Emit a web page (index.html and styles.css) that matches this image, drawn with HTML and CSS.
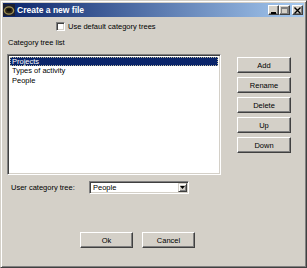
FILE: index.html
```html
<!DOCTYPE html>
<html lang="en">
<head>
  <meta charset="UTF-8" />
  <title>Create a new file</title>
  <link rel="stylesheet" href="styles.css">
</head>
<body>
  <div class="window">
    <div class="titlebar">
      <svg class="app-icon" width="12" height="12" viewBox="0 0 12 12">
        <rect x="0" y="0" width="12" height="12" fill="#1c2030"/>
        <ellipse cx="6" cy="6.5" rx="4.6" ry="3.6" fill="#2a2418" stroke="#a09050" stroke-width="1.4"/>
        <ellipse cx="6" cy="6" rx="2.2" ry="1.4" fill="#0c0c08"/>
      </svg>
      <span class="title">Create a new file</span>
      <div class="title-buttons">
        <div class="tbtn"><svg width="7" height="7" viewBox="0 0 7 7"><rect x="1" y="5" width="5" height="2" fill="#000"/></svg></div>
        <div class="tbtn"><svg width="7" height="7" viewBox="0 0 7 7"><rect x="0.5" y="0.5" width="6" height="6" fill="none" stroke="#808080"/><rect x="0" y="0" width="7" height="2" fill="#808080"/></svg></div>
        <div class="tbtn close"><svg width="7" height="7" viewBox="0 0 7 7"><path d="M0.5 0.5 L6.5 6.5 M6.5 0.5 L0.5 6.5" stroke="#000" stroke-width="1.4"/></svg></div>
      </div>
    </div>

    <div class="content">
      <div class="check-row">
        <span class="checkbox"></span>
        <span>Use default category trees</span>
      </div>

      <div class="label">Category tree list</div>

      <div class="main-row">
        <div class="listbox">
          <div class="item selected">Projects</div>
          <div class="item">Types of activity</div>
          <div class="item">People</div>
        </div>
        <div class="side-buttons">
          <div class="button">Add</div>
          <div class="button">Rename</div>
          <div class="button">Delete</div>
          <div class="button">Up</div>
          <div class="button">Down</div>
        </div>
      </div>

      <div class="combo-row">
        <span class="combo-label">User category tree:</span>
        <div class="combo">
          <span class="combo-text">People</span>
          <span class="combo-arrow"><svg width="5" height="3" viewBox="0 0 5 3"><path d="M0 0 H5 L2.5 3 Z" fill="#000"/></svg></span>
        </div>
      </div>

      <div class="footer">
        <div class="button wide">Ok</div>
        <div class="button wide">Cancel</div>
      </div>
    </div>
  </div>
</body>
</html>
```

FILE: styles.css
```css
body {
  margin: 0;
  font-family: "Liberation Sans", Arial, sans-serif;
  font-size: 7.5px;
  color: #000;
  background: #d4d0c8;
}
.window {
  width: 307px;
  height: 268px;
  box-sizing: border-box;
  background: #d4d0c8;
  border: 1px solid;
  border-color: #d4d0c8 #404040 #404040 #d4d0c8;
  box-shadow: inset 1px 1px #fff, inset -1px -1px #808080;
  padding: 2px;
}
.titlebar {
  height: 14px;
  display: flex;
  align-items: center;
  background: linear-gradient(to right, #0a246a, #a6caf0);
  color: #fff;
}
.app-icon {
  flex: none;
}
.title {
  margin-left: 2px;
  font-weight: bold;
  font-size: 8.5px;
}
.title-buttons {
  margin-left: auto;
  margin-right: 1px;
  display: flex;
}
.tbtn {
  width: 11px;
  height: 10px;
  box-sizing: border-box;
  background: #d4d0c8;
  border: 1px solid;
  border-color: #fff #404040 #404040 #fff;
  box-shadow: inset -1px -1px #808080;
  display: flex;
  align-items: center;
  justify-content: center;
}
.tbtn.close {
  margin-left: 2px;
}
.content {
  display: flex;
  flex-direction: column;
}
.check-row {
  margin-top: 5px;
  margin-left: 53px;
  height: 9px;
  display: flex;
  align-items: center;
  gap: 3px;
}
.checkbox {
  width: 9px;
  height: 9px;
  box-sizing: border-box;
  background: #fff;
  border: 1px solid;
  border-color: #808080 #fff #fff #808080;
  box-shadow: inset 1px 1px #404040, inset -1px -1px #d4d0c8;
}
.label {
  margin-top: 7px;
  margin-left: 5px;
  line-height: 10px;
}
.main-row {
  margin-top: 6px;
  display: flex;
  align-items: flex-start;
}
.listbox {
  margin-left: 4px;
  width: 214px;
  height: 121px;
  box-sizing: border-box;
  background: #fff;
  color: #000;
  border: 1px solid;
  border-color: #808080 #fff #fff #808080;
  box-shadow: inset 1px 1px #404040, inset -1px -1px #d4d0c8;
  padding: 2px;
}
.item {
  height: 9.4px;
  line-height: 9.4px;
  padding-left: 2px;
  white-space: nowrap;
}
.item.selected {
  background: #0a246a;
  color: #fff;
  outline: 1px dotted #b8b8a0;
  outline-offset: -1px;
}
.side-buttons {
  margin-left: 16px;
  margin-top: 3px;
  display: flex;
  flex-direction: column;
  gap: 4px;
}
.button {
  width: 54px;
  height: 16px;
  box-sizing: border-box;
  background: #d4d0c8;
  color: #000;
  border: 1px solid;
  border-color: #fff #404040 #404040 #fff;
  box-shadow: inset -1px -1px #808080;
  display: flex;
  align-items: center;
  justify-content: center;
}
.combo-row {
  margin-top: 6px;
  margin-left: 8px;
  display: flex;
  align-items: center;
  height: 13px;
}
.combo-label {
  width: 78px;
}
.combo {
  width: 100px;
  height: 13px;
  box-sizing: border-box;
  background: #fff;
  border: 1px solid;
  border-color: #808080 #fff #fff #808080;
  box-shadow: inset 1px 1px #404040, inset -1px -1px #d4d0c8;
  padding: 1px;
  display: flex;
  align-items: center;
}
.combo-text {
  flex: 1;
  padding-left: 2px;
}
.combo-arrow {
  width: 9px;
  height: 9px;
  box-sizing: border-box;
  background: #d4d0c8;
  border: 1px solid;
  border-color: #d4d0c8 #404040 #404040 #d4d0c8;
  box-shadow: inset 1px 1px #fff, inset -1px -1px #808080;
  display: flex;
  align-items: center;
  justify-content: center;
}
.footer {
  margin-top: 38px;
  margin-left: 77px;
  display: flex;
  gap: 9px;
}
.button.wide {
  width: 53px;
}
```
